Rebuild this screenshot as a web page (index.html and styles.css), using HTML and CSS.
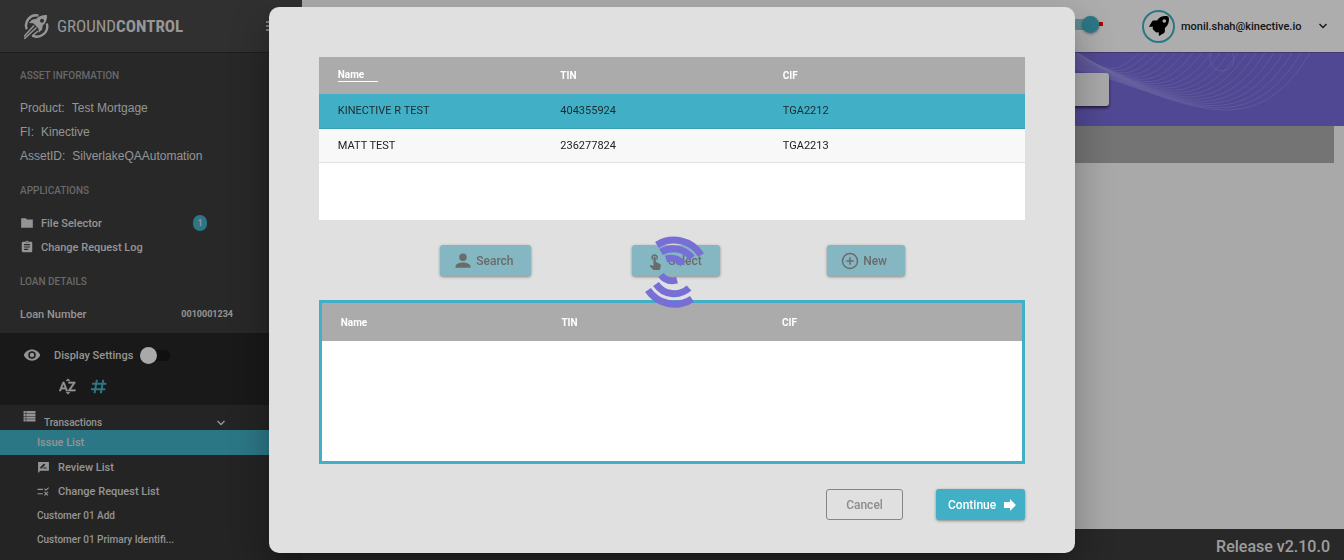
FILE: index.html
```
<!DOCTYPE html>
<html lang="en">
<head>
    <meta charset="UTF-8">
    <meta name="viewport" content="width=device-width, initial-scale=1.0">
    <title>GroundControl</title>
    <link rel="stylesheet" href="styles.css">
</head>
<body>
    <div class="app">
        <aside class="sidebar">
            <div class="brand">
                <svg class="brand-logo" viewBox="0 0 25 25" aria-hidden="true">
                    <path d="M14.500 1.700A10 10 0 0 0 2.800 15.200M22.800 9.500A10.300 10.300 0 0 1 8.500 21.600" fill="none" stroke="currentColor" stroke-width="2.400"/>
                    <path d="M23 1c-4.500-.2-8 .8-10.600 3.800L8 5.800 5 9l4.300.3 5.200 5.200.2 4.300 3.300-3 .8-4.300C21.800 9 23.200 5.500 23 1zm-5 3.700a2 2 0 1 1 0 4 2 2 0 0 1 0-4z" fill="currentColor" fill-rule="evenodd"/>
                    <path d="M10 11.500 0 22.500M12.500 13.500 0 25M14 17l-6 5" fill="none" stroke="currentColor" stroke-width="1.500"/>
                </svg>
                <span class="brand-name">GROUND<b>CONTROL</b></span>
                <button class="menu-btn" aria-label="Toggle menu">
                    <svg viewBox="0 0 12 12"><path d="M0 2h12M0 6h12M0 10h12" stroke="currentColor" stroke-width="1.500"/></svg>
                </button>
            </div>

            <section class="info">
                <h2>ASSET INFORMATION</h2>
                <p class="row plain">Product: <span>Test Mortgage</span></p>
                <p class="row plain">FI: <span>Kinective</span></p>
                <p class="row plain">AssetID: <span>SilverlakeQAAutomation</span></p>

                <h2>APPLICATIONS</h2>
                <a class="row" href="#">
                    <svg class="icon" viewBox="0 0 24 24"><path d="M10 4H2v16h20V6H12z"/></svg>
                    File Selector
                    <span class="count">1</span>
                </a>
                <a class="row" href="#">
                    <svg class="icon" viewBox="0 0 24 24"><path d="M19 3h-4.200a3 3 0 0 0-5.600 0H5a2 2 0 0 0-2 2v14c0 1.100.9 2 2 2h14a2 2 0 0 0 2-2V5a2 2 0 0 0-2-2zm-7 0a1 1 0 1 1 0 2 1 1 0 0 1 0-2zm2 14H7v-2h7zm3-4H7v-2h10zm0-4H7V7h10z"/></svg>
                    Change Request Log
                </a>

                <h2>LOAN DETAILS</h2>
                <p class="row">Loan Number <span class="loan-number">0010001234</span></p>
            </section>

            <section class="display">
                <div class="display-row">
                    <svg class="eye" viewBox="0 0 24 24"><path d="M12 4.500C7 4.500 2.730 7.610 1 12c1.730 4.390 6 7.500 11 7.500s9.270-3.110 11-7.500c-1.730-4.390-6-7.500-11-7.500zM12 17a5 5 0 1 1 0-10 5 5 0 0 1 0 10zm0-8a3 3 0 1 0 0 6 3 3 0 0 0 0-6z"/></svg>
                    <label for="displaySettings">Display Settings</label>
                    <input type="checkbox" class="switch" id="displaySettings">
                </div>
                <div class="display-tools">
                    <button aria-label="Sort by name">
                        <svg viewBox="0 0 24 24" stroke="currentColor" stroke-width="0.800"><path d="M14.940 4.660h-4.720l2.360-2.360zm-4.690 14.710h4.660l-2.330 2.330zM6.100 6.270 1.600 17.730h1.840l.92-2.450h5.110l.92 2.450h1.840L7.740 6.270zm-1.130 7.370 1.940-5.180 1.940 5.180zm10.760 2.500h6.120v1.590h-8.530v-1.290l5.920-8.560h-5.880v-1.600h8.300v1.260z"/></svg>
                    </button>
                    <button class="active" aria-label="Sort by number">
                        <svg viewBox="0 0 24 24"><path d="M10 3.500 7 20.500M18 3.500l-3 17M4 8.500h18M2.500 15.500h18" fill="none" stroke="currentColor" stroke-width="2.400"/></svg>
                    </button>
                </div>
            </section>

            <nav class="menu">
                <button class="menu-head">
                    <svg viewBox="0 0 24 24"><path d="M1 2h4v4H1zm5 0h17v4H6zM1 7h4v4H1zm5 0h17v4H6zM1 12h4v4H1zm5 0h17v4H6zM1 17h4v4H1zm5 0h17v4H6z"/></svg>
                    Transactions
                    <svg class="chevron" viewBox="0 0 10 10"><path d="M1.500 3 5 6.500 8.500 3" fill="none" stroke="currentColor" stroke-width="1.500"/></svg>
                </button>
                <a class="active" href="#">Issue List</a>
                <a href="#">
                    <svg viewBox="0 0 24 24"><path d="M22 2H2v20l4-4h16zM6 14v-2.500l6.900-6.900 2.500 2.500L8.500 14zm12 0h-7.500l2-2H18z"/></svg>
                    Review List
                </a>
                <a href="#">
                    <svg viewBox="0 0 24 24"><path d="m16.500 11-3.500-3.500 1.400-1.400 2.100 2.100 4.300-4.200L22.200 5.400zM11 7H1v2h10zm10 6.400L19.600 12 17 14.600 14.400 12 13 13.400l2.600 2.600-2.600 2.600 1.400 1.400 2.600-2.600 2.600 2.600 1.400-1.400-2.600-2.600zM11 15H1v2h10z"/></svg>
                    Change Request List
                </a>
                <a class="small" href="#">Customer 01 Add</a>
                <a class="small" href="#">Customer 01 Primary Identifi...</a>
            </nav>
        </aside>

        <main class="main">
            <header class="topbar">
                <span class="toggle-wrap">
                    <input type="checkbox" class="switch on" aria-label="Live updates" checked>
                    <span class="dot"></span>
                </span>
                <span class="avatar">
                    <svg viewBox="0 0 24 24"><path fill-rule="evenodd" d="M21 1.300c-4.800-.6-8.600 1-11.200 4.700H6.200c-.8 0-1.400.4-1.800 1L1 12.700l4.600.1c-.7 1.400-.7 2.400.2 3.400l2.500 2.300c1 .8 2 .8 3.200.1L12 23l5.500-3.500c.6-.4.900-1 .9-1.800v-3.500c3.600-2.900 5-6.500 4.300-11.300-.1-.9-.7-1.500-1.700-1.600zm-3.200 3.200a2 2 0 1 1 0 4 2 2 0 0 1 0-4z"/></svg>
                </span>
                <button class="account">monil.shah@kinective.io
                    <svg viewBox="0 0 10 10"><path d="M1.500 3 5 6.500 8.500 3" fill="none" stroke="currentColor" stroke-width="1.400"/></svg>
                </button>
            </header>
            <div class="banner">
                <svg class="waves" viewBox="0 0 280 74" aria-hidden="true"><circle cx="158" cy="6" r="12"/></svg>
                <input class="filter" type="text" aria-label="Filter">
            </div>
            <div class="list-head"></div>
            <footer class="footer">Release v2.10.0</footer>
        </main>
    </div>

    <div class="backdrop">
        <div class="dialog" role="dialog" aria-modal="true" aria-label="Customer search">
            <div class="table-box">
                <table>
                    <thead>
                        <tr><th><span class="sorted">Name</span></th><th>TIN</th><th>CIF</th></tr>
                    </thead>
                    <tbody>
                        <tr class="selected"><td>KINECTIVE R TEST</td><td>404355924</td><td>TGA2212</td></tr>
                        <tr><td>MATT TEST</td><td>236277824</td><td>TGA2213</td></tr>
                    </tbody>
                </table>
            </div>

            <div class="actions">
                <button class="btn" disabled>
                    <svg viewBox="0 0 24 24"><path d="M12 12a5 5 0 1 0 0-10 5 5 0 0 0 0 10zm0 2c-4 0-10 1.800-10 5v2h20v-2c0-3.200-6-5-10-5z"/></svg>
                    Search
                </button>
                <button class="btn" disabled>
                    <svg viewBox="0 0 24 24"><path d="M9 11.240V7.500a2.500 2.500 0 0 1 5 0v3.740a4.500 4.500 0 1 0-5 0zm9.840 4.630-4.540-2.260c-.17-.07-.35-.11-.54-.11H13v-6a1.500 1.500 0 0 0-3 0v10.740l-3.430-.72c-.4-.08-.8.04-1.030.24l-.79.8 4.940 4.940c.27.27.65.44 1.060.44h6.790c.75 0 1.330-.55 1.440-1.280l.75-5.270c.1-.7-.28-1.260-.89-1.520z"/></svg>
                    Select
                </button>
                <button class="btn" disabled>
                    <svg viewBox="0 0 24 24"><path d="M13 7h-2v4H7v2h4v4h2v-4h4v-2h-4zm-1-6a11 11 0 1 0 0 22 11 11 0 0 0 0-22zm0 20a9 9 0 1 1 0-18 9 9 0 0 1 0 18z"/></svg>
                    New
                </button>
                <svg class="spinner" viewBox="-36 -36 72 72" role="img" aria-label="Loading">
                    <path d="M-17-27A32 32 0 0 1 27-17M-13-20A24 24 0 0 1 18-14M-8-13A16 16 0 0 1 9-8"/>
                    <path d="M-13 3Q-7 11 3 8M-18 12A22 22 0 0 0 15 16M-26 18A32 32 0 0 0 18 27"/>
                </svg>
            </div>

            <div class="table-box bordered">
                <table>
                    <thead>
                        <tr><th>Name</th><th>TIN</th><th>CIF</th></tr>
                    </thead>
                </table>
            </div>

            <div class="dialog-footer">
                <button class="btn-cancel">Cancel</button>
                <button class="btn-continue">Continue
                    <svg viewBox="0 0 12 12"><path d="M0 3h6V0l6 6-6 6V9H0z"/></svg>
                </button>
            </div>
        </div>
    </div>

    <script>
        // fan of curves behind the banner
        const waves = document.querySelector('.waves');
        for (let i = 0; i < 20; i++) {
            const path = document.createElementNS('http://www.w3.org/2000/svg', 'path');
            path.setAttribute('d', `M${246 - i * 9} 0C${180 - i * 7} ${110 - i * 4.5} ` +
                `${100 - i * 3} ${30 - i * 0.5} -10 ${12 - i * 1.5}`);
            waves.appendChild(path);
        }
    </script>
</body>
</html>
```
FILE: styles.css
```
* {
    margin: 0;
    padding: 0;
    box-sizing: border-box;
}

body {
    font-family: Roboto, sans-serif;
    font-size: 11px;
    font-weight: 500;
    overflow: hidden;
}

button {
    font: inherit;
    color: inherit;
    background: none;
    border: none;
    cursor: pointer;
}

a {
    color: inherit;
    text-decoration: none;
}

svg {
    display: block;
    flex: none;
    fill: currentColor;
}

.app {
    display: flex;
    height: 100vh;
}

/* Sidebar */
.sidebar {
    width: 302px;
    flex: none;
    background: #353535;
    color: #dadada;
    overflow: hidden;
}

.brand {
    display: flex;
    align-items: center;
    height: 53px;
    padding: 0 24px;
    background: #474747;
    border-bottom: 1px solid #2b2b2b;
    color: #dedede;
}

.brand-logo {
    width: 25px;
    height: 25px;
    margin-right: 8px;
}

.brand-name {
    font-family: "Roboto Condensed", "Liberation Sans Narrow", Roboto, sans-serif;
    font-size: 17px;
    font-weight: 400;
}

.menu-btn {
    margin-left: auto;
}

.menu-btn svg {
    width: 12px;
    height: 12px;
}

.info {
    background: #3b3b3b;
    padding: 0 20px 7px;
}

.info h2 {
    height: 43px;
    line-height: 43px;
    padding-top: 1px;
    font-size: 10px;
    font-weight: 500;
    color: #9a9a9a;
}

.row {
    display: flex;
    align-items: center;
    height: 24px;
}

.plain {
    font-family: "Liberation Sans", sans-serif;
    font-size: 12px;
    font-weight: 400;
}

.plain span {
    margin-left: 7px;
}

.icon {
    width: 14px;
    height: 14px;
    margin-right: 7px;
}

.count {
    width: 14px;
    line-height: 16px;
    margin-left: auto;
    margin-right: 75px;
    border-radius: 8px;
    background: #41b0c6;
    font-size: 9px;
    font-weight: 700;
    text-align: center;
}

.loan-number {
    margin-left: auto;
    margin-right: 49px;
    font-size: 9px;
    font-weight: 700;
}

.display {
    height: 72px;
    padding: 10px 23px;
    background: #252525;
}

.display-row,
.display-tools {
    display: flex;
    align-items: center;
    height: 24px;
}

.eye {
    width: 18px;
    height: 18px;
    margin-right: 13px;
}

.switch {
    appearance: none;
    display: flex;
    align-items: center;
    width: 28px;
    height: 11px;
    margin-left: 9px;
    border-radius: 6px;
    background: #181818;
}

.switch::before {
    content: "";
    width: 17px;
    height: 17px;
    margin-left: -2px;
    border-radius: 50%;
    background: #fafafa;
    flex: none;
}

.display-tools {
    height: 38px;
    padding-left: 35px;
    gap: 12px;
}

.display-tools svg {
    width: 19px;
    height: 19px;
}

.display-tools .active {
    color: #41b0c6;
}

.menu-head {
    display: flex;
    align-items: flex-end;
    width: 100%;
    height: 25px;
    padding: 0 76px 2px 23px;
    font-size: 10px;
}

.menu-head svg {
    width: 13px;
    height: 13px;
    margin-right: 8px;
    align-self: center;
}

.menu-head svg.chevron {
    width: 10px;
    height: 10px;
    margin: 0 0 0 auto;
    align-self: flex-end;
}

.menu a {
    display: flex;
    align-items: center;
    height: 24px;
    padding-left: 37px;
}

.menu a svg {
    width: 13px;
    height: 13px;
    margin-right: 8px;
}

.menu a.active {
    height: 25px;
    background: #41b0c6;
}

.menu a.small {
    font-size: 10px;
}

/* Main area */
.main {
    flex: 1;
    display: flex;
    flex-direction: column;
    background: #fafafa;
}

.topbar {
    display: flex;
    align-items: center;
    justify-content: flex-end;
    height: 52px;
    padding-right: 16px;
    background: #fff;
}

.toggle-wrap {
    display: flex;
    align-items: center;
    margin-right: 39px;
    padding-bottom: 4px;
}

.switch.on {
    justify-content: flex-end;
    background: #8cccd8;
}

.switch.on::before {
    background: #41b0c6;
    box-shadow: 0 1px 3px rgba(0, 0, 0, 0.4);
}

.dot {
    width: 4px;
    height: 4px;
    background: #f00;
}

.avatar {
    display: flex;
    align-items: center;
    justify-content: center;
    width: 33px;
    height: 33px;
    margin-right: 6px;
    border: 2px solid #41b0c6;
    border-radius: 50%;
    color: #000;
}

.avatar svg {
    width: 22px;
    height: 22px;
}

.account {
    display: flex;
    align-items: center;
    justify-content: space-between;
    width: 147px;
    font-size: 11px;
    color: #222;
}

.account svg {
    width: 10px;
    height: 10px;
}

.banner {
    position: relative;
    display: flex;
    align-items: center;
    justify-content: flex-end;
    height: 74px;
    padding: 0 235px 0 20px;
    background: #786bdb;
    border-top: 1px solid #5d53a8;
}

.waves {
    position: absolute;
    top: 0;
    right: 0;
    width: 280px;
    height: 74px;
    fill: none;
    stroke: #aaa2ef;
    stroke-opacity: 0.4;
    stroke-width: 1;
}

.filter {
    position: relative;
    width: 300px;
    height: 33px;
    border: none;
    border-radius: 3px;
    background: #fafafa;
    box-shadow: 0 2px 3px rgba(0, 0, 0, 0.6);
}

.list-head {
    height: 37px;
    margin: 0 10px;
    background: #acacac;
}

.footer {
    margin-top: auto;
    height: 31px;
    line-height: 35px;
    padding-right: 14px;
    background: #3b3b3b;
    color: #e6e6e6;
    font-size: 16px;
    text-align: right;
}

/* Dialog */
.backdrop {
    position: fixed;
    inset: 0;
    display: flex;
    align-items: center;
    justify-content: center;
    background: rgba(0, 0, 0, 0.32);
}

.dialog {
    width: 60%;
    padding: 50px 50px 33px;
    border-radius: 10px;
    background: #e0e0e0;
    box-shadow: 0 11px 15px -7px rgba(0, 0, 0, 0.2),
        0 24px 38px 3px rgba(0, 0, 0, 0.14),
        0 9px 46px 8px rgba(0, 0, 0, 0.12);
}

.table-box {
    min-height: 163px;
    background: #fff;
}

.table-box.bordered {
    min-height: 164px;
    border: 3px solid #41b0c6;
}

table {
    width: 100%;
    table-layout: fixed;
    border-collapse: collapse;
}

th {
    width: 31.5%;
    height: 37px;
    padding-left: 19px;
    background: #ababab;
    color: #fff;
    font-size: 10px;
    font-weight: 700;
    text-align: left;
}

th:last-child {
    width: 37%;
}

.bordered th {
    height: 38px;
}

td {
    height: 34px;
    padding-left: 19px;
    border-bottom: 1px solid #e0e0e0;
    background: #f8f8f8;
    color: #222;
    font-weight: 400;
}

.selected td {
    background: #41b0c6;
    border-color: #3ba0b4;
    color: #1c2b2e;
}

.sorted {
    display: block;
    width: 40px;
    padding-bottom: 1px;
    border-bottom: 1px solid #fff;
}

.actions {
    position: relative;
    display: grid;
    grid-template-columns: repeat(3, 1fr);
    justify-items: center;
    padding: 25px 64px 24px 72px;
}

.btn,
.btn-cancel,
.btn-continue {
    height: 31px;
    border-radius: 3px;
    font-size: 12px;
}

.btn,
.btn-continue {
    display: flex;
    align-items: center;
    box-shadow: 0 1px 3px rgba(0, 0, 0, 0.4);
}

.btn {
    gap: 4px;
    padding: 0 18px 0 14px;
    background: #84b7c2;
    color: #6b6b6b;
}

.btn svg {
    width: 18px;
    height: 18px;
}

.spinner {
    position: absolute;
    top: 50%;
    left: 50%;
    width: 72px;
    height: 72px;
    transform: translate(-50%, -50%);
    margin: 12px 0 0 2px;
    fill: none;
    stroke: #776ed6;
    stroke-width: 7;
}

.dialog-footer {
    display: flex;
    justify-content: flex-end;
    gap: 33px;
    padding-top: 25px;
}

.btn-cancel {
    width: 77px;
    border: 1px solid #858585;
    color: #8c8c8c;
}

.btn-continue {
    gap: 8px;
    padding: 0 9px 0 12px;
    background: #41b0c6;
    color: #fff;
}

.btn-continue svg {
    width: 12px;
    height: 12px;
}
```
